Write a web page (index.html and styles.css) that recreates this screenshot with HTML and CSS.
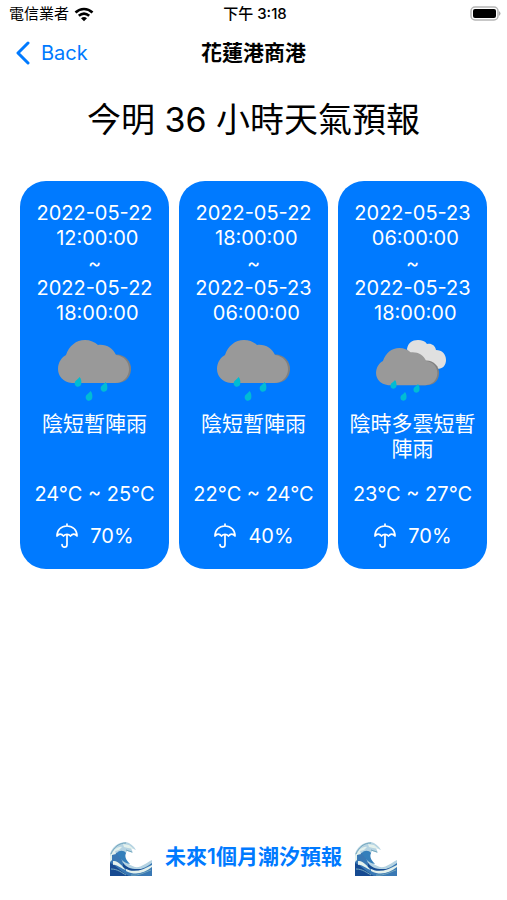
FILE: index.html
```html
<!DOCTYPE html>
<html lang="zh-Hant">
<head>
<meta charset="utf-8">
<meta name="viewport" content="width=device-width, initial-scale=1">
<title>花蓮港商港</title>
<link rel="stylesheet" href="styles.css">
</head>
<body>
<svg class="defs" aria-hidden="true">
  <defs>
    <symbol id="drop" viewBox="0 0 8 11"><path d="M5.800 0C7.600 2 8 5 7.600 7.600 7 10.200 4.600 11 2.400 10.400.3 9.600-.2 7 .8 5 1.900 3.300 4.300 2.200 5.800 0Z" fill="#00bcd4"/></symbol>
    <symbol id="cloud" viewBox="0 0 74 44">
      <path d="M52 16C62 11 74 19 73 30 72 39 66 43 58 43H48Z" fill="#808080"/>
      <path d="M14 43C5 42 0 36 0 29 0 22 4 17 8 15 11 6 18 0 27 0 32 0 37 2 40 5 48 4 55 8 58 15 66 16 71 22 71 29 71 37 65 43 57 43Z" fill="#999"/>
    </symbol>
    <symbol id="rain" viewBox="0 0 76 64">
      <use href="#cloud" x="1" y="1" width="74" height="44"/>
      <use href="#drop" x="17" y="38" width="8" height="10"/>
      <use href="#drop" x="43" y="43" width="8" height="10"/>
      <use href="#drop" x="28" y="52" width="8" height="10"/>
    </symbol>
    <symbol id="cloudy-rain" viewBox="0 0 76 64">
      <path d="M32 10C33 4 37 1 43 1 47 1 50 2 52 5 56 4 60 6 61 11 67 11 71 15 71 21 71 26 68 30 62 30H38Z" fill="#e0e0e0"/>
      <use href="#cloud" x="1" y="9" width="64" height="38"/>
      <use href="#drop" x="15" y="41" width="7" height="9"/>
      <use href="#drop" x="38" y="45" width="7" height="9"/>
      <use href="#drop" x="25" y="53" width="7" height="9"/>
    </symbol>
    <symbol id="umbrella" viewBox="0 0 24 26">
      <g fill="none" stroke="#fff" stroke-width="1.700" stroke-linecap="round" stroke-linejoin="round">
        <path d="M12 1V3M2 13C2 7 6 3 12 3S22 7 22 13C20 10.500 17.500 10.500 15.500 13 13.500 10.800 10.500 10.800 8.500 13 6.500 10.500 4 10.500 2 13Z"/>
        <path d="M12 12V21.500C12 23.300 11 24.200 9.500 24.200S7 23.200 7 21.500"/>
      </g>
    </symbol>
    <symbol id="wave" viewBox="0 0 44 36">
      <path d="M1 32V13C3 6 9 1 17 1 21 2 25 5 27 9L22 7 24 12 18 10 16 14C15 19 19 24 26 26 32 27 37 22 43 19V35H1Z" fill="#b5d3e2"/>
      <path d="M1 16C5 11 9 11 13 13 11 18 14 24 21 29 28 31 36 27 43 22V35H1Z" fill="#3978b4"/>
      <path d="M8 12C10 9 15 9 17 12 15 16 18 20 21 23 15 22 11 18 8 12Z" fill="#347fbb"/>
      <path d="M1 22C7 24 12 31 20 35H1ZM14 22C18 28 27 30 43 26 35 32 24 33 14 26Z" fill="#164a91"/>
      <path d="M1 15C4 9 9 5 13 6L10 9 6 10 7 13 3 14 3 19 1 21ZM14 3L20 4 25 8 19 7 15 6ZM4 20C9 19 13 25 17 29 12 28 8 23 4 24ZM17 28C25 32 34 29 43 24V26C35 32 27 35 17 30Z" fill="#e4f1ec"/>
      <path d="M2 13C5 6 10 2 17 2M17 9L23 11M2 28C9 28 13 32 17 34M22 34C30 35 36 31 42 29" fill="none" stroke="#75a8be" stroke-width="1"/>
    </symbol>
  </defs>
</svg>

<div class="status">
  <div class="carrier">電信業者
    <svg class="wifi" viewBox="0 0 20 15" aria-hidden="true"><g fill="none" stroke="#000" stroke-width="2.600"><path d="M1.500 5.500C6.500.8 13.500.8 18.500 5.500"/><path d="M4.800 8.800C8 6 12 6 15.200 8.800"/></g><path d="M7 11.300C8.900 9.700 11.100 9.700 13 11.300L10 14.300Z"/></svg>
  </div>
  <div class="time">下午 3:18</div>
  <svg class="battery" viewBox="0 0 32 16" aria-hidden="true"><rect x="2" y="1" width="27" height="13" rx="4" fill="#fff" stroke="#b5b5b5" stroke-width="1.500"/><rect x="4" y="3" width="23" height="9" rx="2"/><path d="M30 5Q33 7.500 30 10Z" fill="#aaa"/></svg>
</div>

<header class="nav">
  <a class="back" href="#"><svg class="chevron" viewBox="0 0 14 24" aria-hidden="true"><path d="M12 2 2 12 12 22" fill="none" stroke="#007aff" stroke-width="3" stroke-linecap="round" stroke-linejoin="round"/></svg>Back</a>
  <h1 class="title">花蓮港商港</h1>
</header>

<main class="main">
  <h2 class="heading">今明 36 小時天氣預報</h2>
  <div class="cards">
    <section class="card">
      <p class="period">2022-05-22
 12:00:00
~
2022-05-22
 18:00:00</p>
      <svg class="weather" aria-hidden="true"><use href="#rain"/></svg>
      <p class="condition">陰短暫陣雨</p>
      <p class="temp">24°C ~ 25°C</p>
      <p class="chance"><svg class="umbrella" aria-hidden="true"><use href="#umbrella"/></svg>70%</p>
    </section>
    <section class="card">
      <p class="period">2022-05-22
 18:00:00
~
2022-05-23
 06:00:00</p>
      <svg class="weather" aria-hidden="true"><use href="#rain"/></svg>
      <p class="condition">陰短暫陣雨</p>
      <p class="temp">22°C ~ 24°C</p>
      <p class="chance"><svg class="umbrella" aria-hidden="true"><use href="#umbrella"/></svg>40%</p>
    </section>
    <section class="card">
      <p class="period">2022-05-23
 06:00:00
~
2022-05-23
 18:00:00</p>
      <svg class="weather" aria-hidden="true"><use href="#cloudy-rain"/></svg>
      <p class="condition">陰時多雲短暫陣雨</p>
      <p class="temp">23°C ~ 27°C</p>
      <p class="chance"><svg class="umbrella" aria-hidden="true"><use href="#umbrella"/></svg>70%</p>
    </section>
  </div>
</main>

<footer class="footer">
  <button class="tide" type="button"><svg class="wave" aria-hidden="true"><use href="#wave"/></svg><span class="tide-label">未來1個月潮汐預報</span><svg class="wave" aria-hidden="true"><use href="#wave"/></svg></button>
</footer>
</body>
</html>
```

FILE: styles.css
```css
* {
  box-sizing: border-box;
}

body {
  display: flex;
  flex-direction: column;
  min-height: 100vh;
  margin: 0;
  background: #fff;
  color: #000;
  font-family: Inter, "Noto Sans CJK TC", sans-serif;
}

h1, h2, p {
  margin: 0;
}

.defs {
  position: absolute;
  width: 0;
  height: 0;
}

.status {
  display: grid;
  grid-template-columns: 1fr auto 1fr;
  align-items: center;
  height: 28px;
  padding: 0 6px 0 9px;
  font-size: 15px;
  line-height: 28px;
}

.carrier {
  display: flex;
  align-items: center;
  gap: 5px;
}

.wifi {
  width: 20px;
  height: 15px;
}

.time {
  font-weight: 500;
}

.battery {
  justify-self: end;
  width: 32px;
  height: 16px;
}

.nav {
  display: grid;
  grid-template-columns: 1fr auto 1fr;
  align-items: center;
  height: 50px;
  padding: 0 16px;
}

.back {
  display: flex;
  align-items: center;
  gap: 11px;
  color: #007aff;
  font-size: 20px;
  text-decoration: none;
}

.chevron {
  width: 14px;
  height: 24px;
}

.title {
  font-size: 21px;
  font-weight: 700;
  line-height: 28px;
}

.main {
  flex: 1;
  padding: 18px 20px;
}

.heading {
  margin-bottom: 37px;
  font-size: 34px;
  font-weight: 400;
  line-height: 48px;
  text-align: center;
}

.cards {
  display: grid;
  grid-template-columns: repeat(3, 1fr);
  gap: 10px;
}

.card {
  display: flex;
  flex-direction: column;
  align-items: center;
  padding: 20px 8px;
  border-radius: 26px;
  background: #007aff;
  color: #fff;
  font-size: 20px;
  line-height: 25px;
  text-align: center;
}

.period {
  white-space: pre-wrap;
}

.weather {
  width: 76px;
  height: 64px;
  margin: 13px 0 8px;
}

.condition {
  min-height: 50px;
  font-size: 21px;
}

.temp {
  margin-top: 21px;
  white-space: nowrap;
}

.chance {
  display: flex;
  align-items: center;
  gap: 11px;
  margin-top: 16px;
}

.umbrella {
  width: 24px;
  height: 26px;
}

.footer {
  display: flex;
  justify-content: center;
  padding: 0 16px 23px;
}

.tide {
  display: flex;
  align-items: flex-start;
  gap: 12px;
  padding: 0;
  border: 0;
  background: none;
  color: #007aff;
  font: inherit;
  font-size: 21px;
  font-weight: 600;
  line-height: 32px;
}

.wave {
  width: 44px;
  height: 36px;
}
```
